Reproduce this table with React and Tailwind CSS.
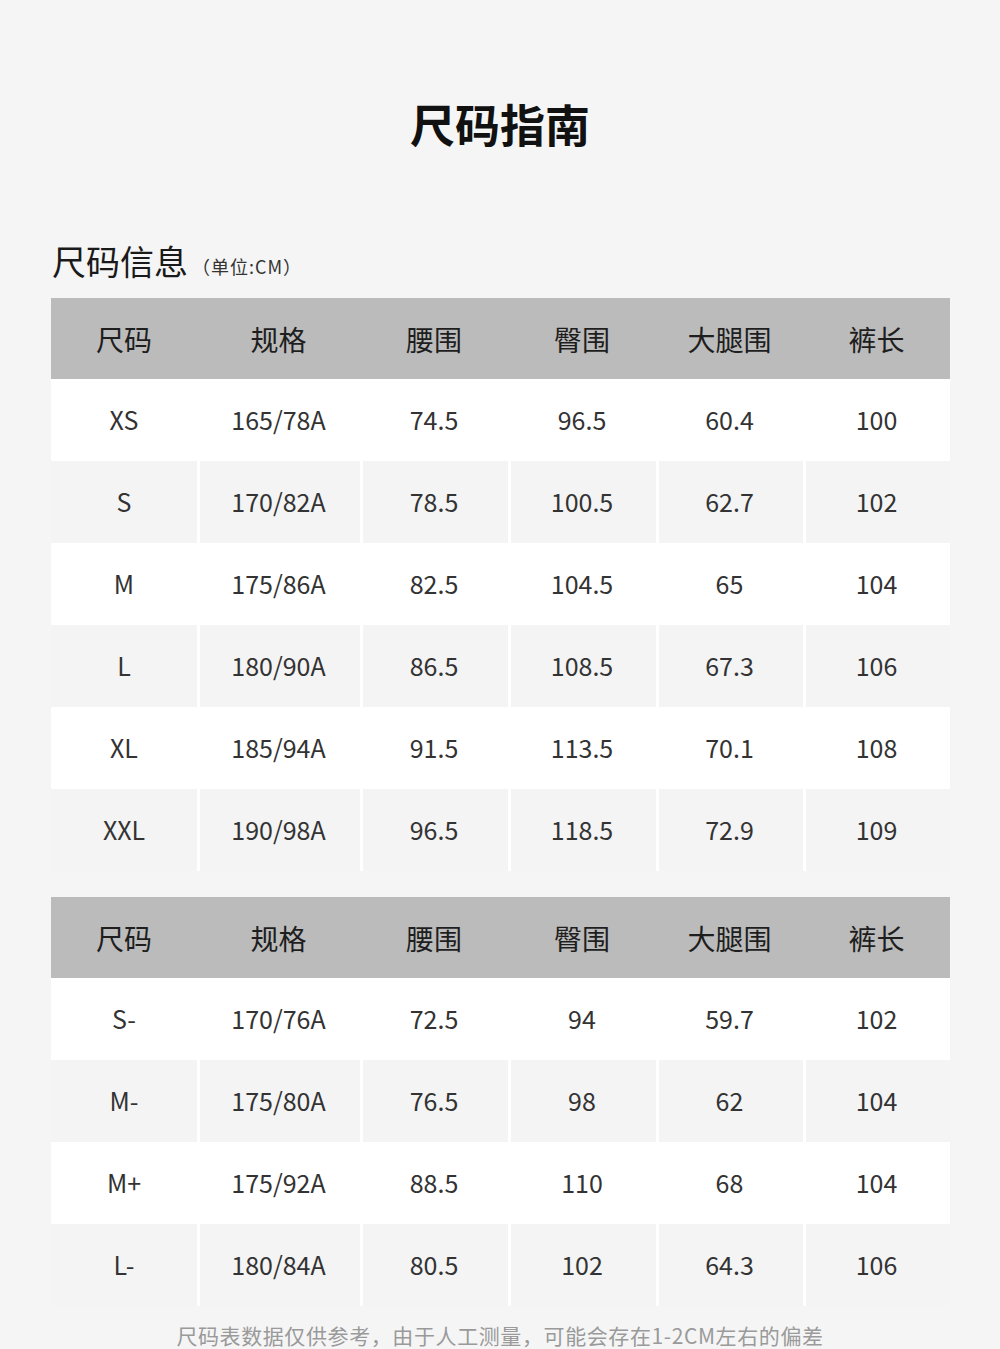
const font = { fontFamily: '"Noto Sans CJK SC", "Noto Sans", sans-serif' }

const heads = ['尺码', '规格', '腰围', '臀围', '大腿围', '裤长']

const table1 = [
  ['XS', '165/78A', '74.5', '96.5', '60.4', '100'],
  ['S', '170/82A', '78.5', '100.5', '62.7', '102'],
  ['M', '175/86A', '82.5', '104.5', '65', '104'],
  ['L', '180/90A', '86.5', '108.5', '67.3', '106'],
  ['XL', '185/94A', '91.5', '113.5', '70.1', '108'],
  ['XXL', '190/98A', '96.5', '118.5', '72.9', '109'],
]

const table2 = [
  ['S-', '170/76A', '72.5', '94', '59.7', '102'],
  ['M-', '175/80A', '76.5', '98', '62', '104'],
  ['M+', '175/92A', '88.5', '110', '68', '104'],
  ['L-', '180/84A', '80.5', '102', '64.3', '106'],
]

function SizeTable({ rows }) {
  return (
    <div className="w-[899px]">
      <div className="grid grid-cols-[146px_163px_148px_148px_147px_147px] h-[81px] bg-[#bbbbbb] items-center text-center text-[28px] text-[#1e1e1e]">
        {heads.map((h) => (
          <div key={h}>{h}</div>
        ))}
      </div>
      {rows.map((r, i) => {
        const grey = i % 2 === 1
        return (
          <div key={r[0]} className="grid grid-cols-[146px_163px_148px_148px_147px_147px] h-[82px]">
            {r.map((c, j) => (
              <div
                key={j}
                className={`flex items-center justify-center text-[25px] text-[#333] ${
                  grey ? 'bg-[#f4f4f5]' : 'bg-white'
                } ${grey && j > 0 ? 'border-l-[3px] border-white pr-[3px]' : ''}`}
              >
                {c}
              </div>
            ))}
          </div>
        )
      })}
    </div>
  )
}

export default function App() {
  return (
    <div className="w-[1000px] h-[1349px] overflow-hidden bg-[#f5f5f5]" style={font}>
      <h1 className="pt-[92px] text-center text-[45px] font-bold leading-[64px] text-[#111]">尺码指南</h1>
      <div className="mt-[82px] ml-[52px] flex items-end gap-1">
        <span className="text-[34px] leading-[46px] text-[#1a1a1a]">尺码信息</span>
        <span className="pb-[4px] text-[18px] tracking-[1px] text-[#333]">（单位:CM）</span>
      </div>
      <div className="mt-[14px] ml-[51px]">
        <SizeTable rows={table1} />
      </div>
      <div className="mt-[26px] ml-[51px]">
        <SizeTable rows={table2} />
      </div>
      <p className="mt-[14px] text-center text-[21px] tracking-[0.6px] text-[#9a9a9a]">
        尺码表数据仅供参考，由于人工测量，可能会存在1-2CM左右的偏差
      </p>
    </div>
  )
}
